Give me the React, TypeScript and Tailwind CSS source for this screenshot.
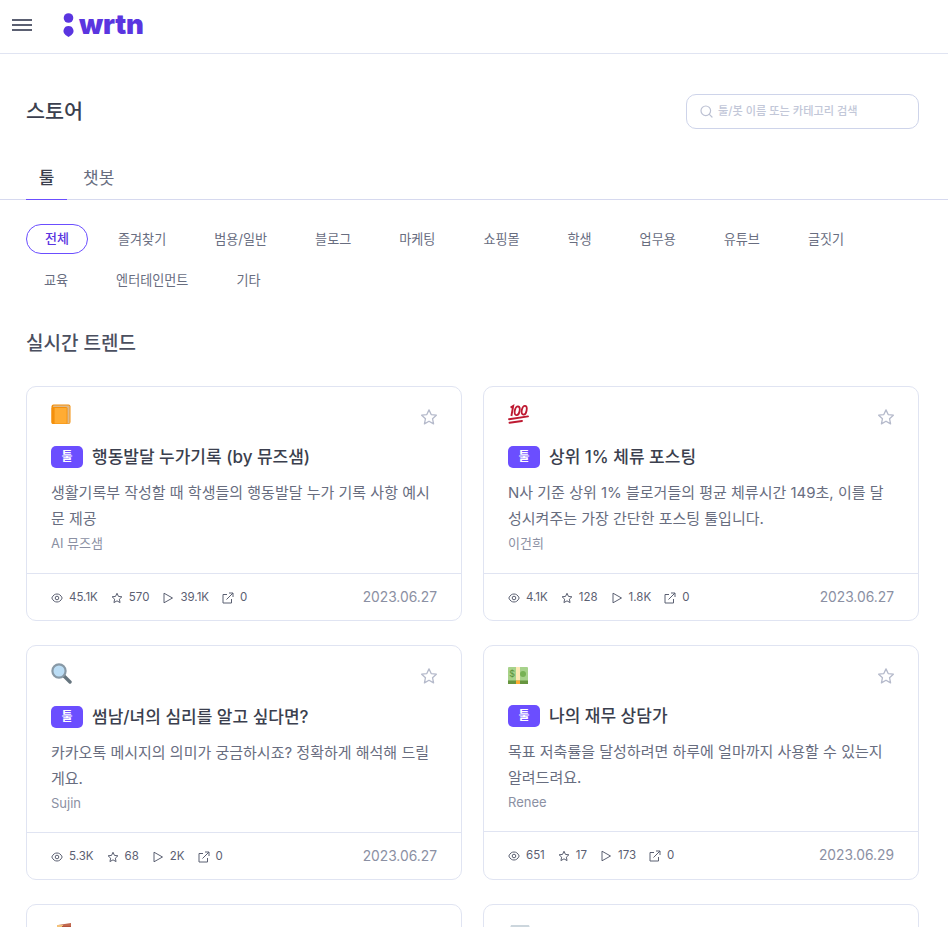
import React from "react";

const font = { fontFamily: '"Inter", "Noto Sans CJK KR", sans-serif' };

function Book() {
  return (
    <svg width="20" height="21" viewBox="0 0 20 21">
      <rect x="0.5" y="0.5" width="19" height="19.5" rx="2" fill="#f4900c" />
      <rect x="2" y="1.6" width="16.6" height="17.8" rx="1" fill="#ddb98a" />
      <rect x="0.5" y="3" width="16" height="17" rx="1.5" fill="#f4900c" />
      <rect x="3.6" y="4" width="12" height="15.5" fill="#ffac33" />
    </svg>
  );
}
function Hundred() {
  return (
    <svg width="21" height="20" viewBox="0 0 21 20" fill="none" stroke="#be1931">
      <path d="M2.6 3.6 L5.2 2 L3.4 12" strokeWidth="1.9" />
      <ellipse cx="9.2" cy="6.8" rx="2.4" ry="4.4" strokeWidth="1.8" transform="rotate(12 9.2 6.8)" />
      <ellipse cx="16.2" cy="6.2" rx="2.4" ry="4.4" strokeWidth="1.8" transform="rotate(12 16.2 6.2)" />
      <path d="M1 15.2 L20 12.4" strokeWidth="1.9" strokeLinecap="round" />
      <path d="M1.5 18.8 L14 17" strokeWidth="1.9" strokeLinecap="round" />
    </svg>
  );
}
function Magnifier() {
  return (
    <svg width="21" height="21" viewBox="0 0 21 21">
      <path d="M13 13 L19 19" stroke="#66757f" strokeWidth="3.4" strokeLinecap="round" />
      <circle cx="8" cy="8" r="6.6" fill="#bbddf5" stroke="#8899a6" strokeWidth="2.2" />
    </svg>
  );
}
function Money() {
  return (
    <svg width="20" height="17" viewBox="0 0 20 17" className="mt-[4px]">
      <rect x="0" y="0" width="20" height="17" rx="1" fill="#a7d28b" />
      <rect x="0" y="13.5" width="20" height="3.5" fill="#67953f" />
      <rect x="8" y="0" width="4" height="13.5" fill="#ffe8b6" />
      <rect x="8" y="13.5" width="4" height="3.5" fill="#ffac33" />
      <circle cx="15" cy="7" r="3" fill="#77b255" />
      <text x="4.2" y="10" fontSize="9" fill="#5c913b" textAnchor="middle" fontFamily="Inter">$</text>
    </svg>
  );
}
function Books() {
  return (
    <svg width="21" height="5" viewBox="0 0 21 5" className="block">
      <path d="M7 2 L20 0 L20 2 L7 2 Z" fill="#c1694f" />
      <rect x="6" y="2" width="6" height="1" fill="#f4c27a" />
      <rect x="12" y="2" width="8" height="1" fill="#c1694f" />
      <rect x="6" y="3" width="14" height="2" fill="#b5533c" />
      <rect x="6" y="3" width="5" height="1" fill="#f4c27a" />
    </svg>
  );
}
function Paper() {
  return (
    <svg width="20" height="3" viewBox="0 0 20 3" className="block ml-[2px]">
      <path d="M1 0 H19 L20 3 H0 Z" fill="#ccd6dd" />
    </svg>
  );
}

function Eye() {
  return (
    <svg width="12" height="12" viewBox="0 0 12 12" fill="none" stroke="#5b6072" strokeWidth="1">
      <path d="M0.8 6 C2.2 2.9 4 2 6 2 C8 2 9.8 2.9 11.2 6 C9.8 9.1 8 10 6 10 C4 10 2.2 9.1 0.8 6 Z" />
      <circle cx="6" cy="6" r="1.8" />
    </svg>
  );
}
function Star({ size = 12, color = "#5b6072", sw = 1 }: { size?: number; color?: string; sw?: number }) {
  return (
    <svg width={size} height={size} viewBox="0 0 24 24" fill="none" stroke={color} strokeWidth={(sw * 24) / size} strokeLinejoin="round">
      <path d="M12 2.5 L14.9 8.8 L21.8 9.6 L16.7 14.3 L18.1 21.2 L12 17.7 L5.9 21.2 L7.3 14.3 L2.2 9.6 L9.1 8.8 Z" />
    </svg>
  );
}
function Play() {
  return (
    <svg width="12" height="12" viewBox="0 0 12 12" fill="none" stroke="#5b6072" strokeWidth="1" strokeLinejoin="round">
      <path d="M2 1.2 L10.5 6 L2 10.8 Z" />
    </svg>
  );
}
function Share() {
  return (
    <svg width="12" height="12" viewBox="0 0 12 12" fill="none" stroke="#5b6072" strokeWidth="1">
      <path d="M5 2.5 H1 V11 H9.5 V7" />
      <path d="M4.5 7.5 L11 1 M7 1 H11 V5" />
    </svg>
  );
}

type Card = {
  icon: React.ReactNode;
  title: string;
  desc: string[];
  author: string;
  stats: string[];
  date: string;
  bodyH: string;
  titleMt: string;
};

const cards: Card[] = [
  { icon: <Book />, title: "행동발달 누가기록 (by 뮤즈샘)", desc: ["생활기록부 작성할 때 학생들의 행동발달 누가 기록 사항 예시", "문 제공"], author: "AI 뮤즈샘", stats: ["45.1K", "570", "39.1K", "0"], date: "2023.06.27", bodyH: "h-[187px]", titleMt: "mt-[17px]" },
  { icon: <Hundred />, title: "상위 1% 체류 포스팅", desc: ["N사 기준 상위 1% 블로거들의 평균 체류시간 149초, 이를 달", "성시켜주는 가장 간단한 포스팅 툴입니다."], author: "이건희", stats: ["4.1K", "128", "1.8K", "0"], date: "2023.06.27", bodyH: "h-[187px]", titleMt: "mt-[17px]" },
  { icon: <Magnifier />, title: "썸남/녀의 심리를 알고 싶다면?", desc: ["카카오톡 메시지의 의미가 궁금하시죠? 정확하게 해석해 드릴", "게요."], author: "Sujin", stats: ["5.3K", "68", "2K", "0"], date: "2023.06.27", bodyH: "h-[187px]", titleMt: "mt-[18px]" },
  { icon: <Money />, title: "나의 재무 상담가", desc: ["목표 저축률을 달성하려면 하루에 얼마까지 사용할 수 있는지", "알려드려요."], author: "Renee", stats: ["651", "17", "173", "0"], date: "2023.06.29", bodyH: "h-[186px]", titleMt: "mt-[17px]" },
];

const chips1 = ["즐겨찾기", "범용/일반", "블로그", "마케팅", "쇼핑몰", "학생", "업무용", "유튜브", "글짓기"];
const chips2 = ["교육", "엔터테인먼트", "기타"];

function Chip({ label }: { label: string }) {
  return <div className="h-[30px] px-[18px] pt-[2px] flex items-center text-[13.1px] text-[#686d7f] whitespace-nowrap">{label}</div>;
}

function ToolCard({ c }: { c: Card }) {
  const icons = [<Eye />, <Star />, <Play />, <Share />];
  return (
    <div className="h-[235px] rounded-[10px] border border-[#e0e4f2] bg-white flex flex-col">
      <div className={`${c.bodyH} px-[24px] pt-[17px] border-b border-[#e0e4f2]`}>
        <div className="h-[24px] flex items-start justify-between">
          <div className="h-[21px] flex items-start">{c.icon}</div>
          <div className="pt-[4px] -mr-[1px]"><Star size={18} color="#b5bacb" sw={1.3} /></div>
        </div>
        <div className={`${c.titleMt} h-[24px] flex items-center gap-[9px]`}>
          <div className="w-[32px] h-[22px] rounded-[5px] bg-[#6b4eff] text-white text-[12px] font-semibold flex items-center justify-center">툴</div>
          <div className="text-[17px] leading-[24px] font-medium text-[#3b3f4e] whitespace-nowrap">{c.title}</div>
        </div>
        <div className="mt-[11px] text-[15px] leading-[26px] text-[#686d7f] whitespace-nowrap">
          {c.desc.map((d) => <div key={d}>{d}</div>)}
        </div>
        <div className="text-[13px] leading-[20px] text-[#8b90a3] mt-[1px]">{c.author}</div>
      </div>
      <div className="flex-1 px-[24px] flex items-center justify-between">
        <div className="flex items-center gap-[13px] pt-[1px]">
          {c.stats.map((s, i) => (
            <div key={i} className="flex items-center gap-[6px] text-[11.5px] text-[#5b6072]">
              {icons[i]}
              <span>{s}</span>
            </div>
          ))}
        </div>
        <div className="text-[13.8px] text-[#8b90a3]">{c.date}</div>
      </div>
    </div>
  );
}

export default function App() {
  return (
    <div className="w-[948px] h-[945px] bg-white" style={font}>
      <div className="h-[927px] overflow-hidden">
        <header className="h-[54px] border-b border-[#e0e4f2] flex items-center pl-[12px] pb-[3px]">
          <div className="flex flex-col gap-[3px] w-[20px]">
            <div className="h-[2px] bg-[#5b6072]" />
            <div className="h-[2px] bg-[#5b6072]" />
            <div className="h-[2px] bg-[#5b6072]" />
          </div>
          <div className="ml-[31px] flex items-center gap-[5px]">
            <svg width="11" height="24" viewBox="0 0 11 24">
              <circle cx="5.5" cy="5" r="4.8" fill="#5a35e0" />
              <path d="M5.5 13 A5 5 0 0 1 8.5 22 L5.5 24 L2.5 22 A5 5 0 0 1 5.5 13 Z" fill="#5a35e0" />
            </svg>
            <span className="text-[#5a35e0] text-[27.5px] leading-none font-black tracking-[-0.2px]">wrtn</span>
          </div>
        </header>

        <div className="pl-[26px] pr-[29px] pt-[40px] h-[113px] flex items-start justify-between">
          <h1 className="text-[20.7px] leading-[33px] mt-[1px] font-medium text-[#3b3f4e]">스토어</h1>
          <div className="w-[233px] h-[35px] rounded-[10px] border border-[#ced4ea] flex items-center pl-[13px] gap-[5px]">
            <svg width="13" height="13" viewBox="0 0 13 13" fill="none" stroke="#bcc1d3" strokeWidth="1.2">
              <circle cx="5.8" cy="5.8" r="4.8" />
              <path d="M9.4 9.4 L12 12" strokeLinecap="round" />
            </svg>
            <span className="text-[11.2px] font-medium text-[#c2c7d8]">툴/봇 이름 또는 카테고리 검색</span>
          </div>
        </div>

        <div className="h-[33px] border-b border-[#d6d9ef] pl-[26px] flex">
          <div className="w-[41px] h-[33px] border-b border-[#6b4eff] text-[17px] font-medium text-[#3b3f4e] flex justify-center pt-[1px] leading-[20px]">툴</div>
          <div className="ml-[16px] text-[17px] text-[#686d7f] pt-[1px] leading-[20px]">챗봇</div>
        </div>

        <div className="pl-[26px] pt-[24px] flex flex-col gap-[11px]">
          <div className="flex gap-[12px]">
            <div className="h-[30px] w-[62px] rounded-full border border-[#6b4eff] text-[#5a35e0] text-[13px] font-medium flex items-center justify-center">전체</div>
            {chips1.map((c) => <Chip key={c} label={c} />)}
          </div>
          <div className="flex gap-[12px]">
            {chips2.map((c) => <Chip key={c} label={c} />)}
          </div>
        </div>

        <h2 className="pl-[26px] mt-[34px] text-[19px] leading-[30px] font-medium text-[#4b4f5f]">실시간 트렌드</h2>

        <div className="mt-[27px] ml-[26px] mr-[29px] grid grid-cols-2 gap-x-[21px] gap-y-[24px]">
          {cards.map((c) => <ToolCard key={c.title} c={c} />)}
          <div className="h-[235px] rounded-[10px] border border-[#e0e4f2] px-[24px] pt-[18px]"><Books /></div>
          <div className="h-[235px] rounded-[10px] border border-[#e0e4f2] px-[24px] pt-[20px]"><Paper /></div>
        </div>
      </div>
    </div>
  );
}
